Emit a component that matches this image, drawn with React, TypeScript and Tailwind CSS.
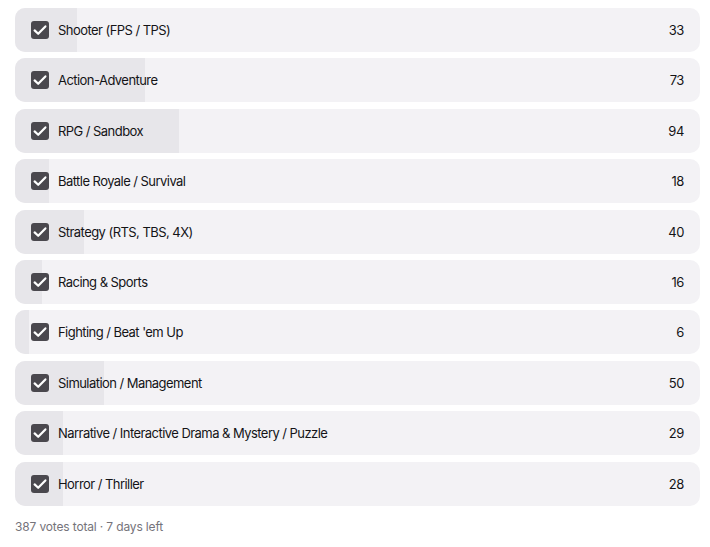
import React from "react";

const options: [string, number][] = [
  ["Shooter (FPS / TPS)", 33],
  ["Action-Adventure", 73],
  ["RPG / Sandbox", 94],
  ["Battle Royale / Survival", 18],
  ["Strategy (RTS, TBS, 4X)", 40],
  ["Racing & Sports", 16],
  ["Fighting / Beat 'em Up", 6],
  ["Simulation / Management", 50],
  ["Narrative / Interactive Drama & Mystery / Puzzle", 29],
  ["Horror / Thriller", 28],
];

const total = 387;

export default function App() {
  return (
    <div
      className="min-h-[547px] bg-white pl-[15px] pr-[10px] pt-2"
      style={{ fontFamily: "Inter, 'Noto Sans', sans-serif" }}
    >
      <div className="flex flex-col gap-[6.4px]">
        {options.map(([label, votes]) => {
          const pct = Math.round((votes / total) * 100);
          return (
            <div
              key={label}
              className="relative flex h-[44px] items-center overflow-hidden rounded-[10px] bg-[#f3f2f5] pl-4 pr-4"
            >
              <div
                className="absolute left-0 top-0 h-full bg-[#e7e6ea]"
                style={{ width: `${pct}%` }}
              />
              <div className="relative flex h-[18px] w-[18px] items-center justify-center rounded-[3px] bg-[#4a484e]">
                <svg width="18" height="18" viewBox="0 0 18 18" fill="none">
                  <path
                    d="M3.6 9.4 L7.2 12.8 L14.4 5.4"
                    stroke="white"
                    strokeWidth="2.2"
                    strokeLinecap="round"
                    strokeLinejoin="round"
                  />
                </svg>
              </div>
              <span className="relative ml-[9px] text-[13px] leading-5 tracking-[-0.55px] text-[#141417]">{label}</span>
              <span className="relative ml-auto text-[13px] leading-5 tracking-[-0.4px] text-[#141417]">{votes}</span>
            </div>
          );
        })}
      </div>
      <div className="mt-[13px] text-[12px] leading-4 tracking-[-0.15px] text-[#75737a]">387 votes total · 7 days left</div>
    </div>
  );
}
